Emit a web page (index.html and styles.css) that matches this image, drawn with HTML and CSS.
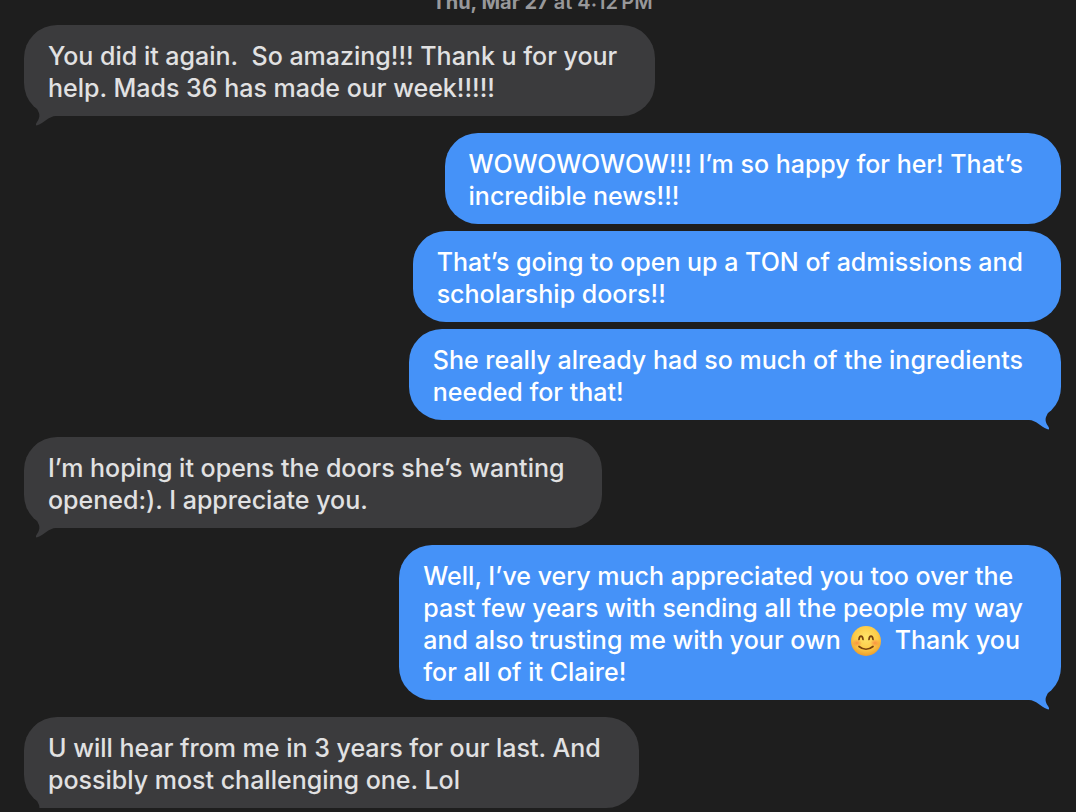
FILE: index.html
```html
<!DOCTYPE html>
<html lang="en">
<head>
    <meta charset="UTF-8">
    <title>Messages</title>
    <link rel="stylesheet" href="styles.css">
</head>
<body>
    <main class="chat">
        <div class="date"><strong>Thu, Mar 27</strong> at 4:12&thinsp;PM</div>

        <div class="group received">
            <p class="bubble">You did it again.&nbsp; So amazing!!! Thank u for your<br>help. Mads 36 has made our week!!!!!
                <svg class="tail" viewBox="0 0 24 18" aria-hidden="true"><path d="M3 0L4 3C6 6 6 10 3 14C1 17 2 18 4 17C10 15 15 8 22 8L24 8L24 0Z"/></svg>
            </p>
        </div>

        <div class="group sent">
            <p class="bubble">WOWOWOWOW!!! I’m so happy for her! That’s<br>incredible news!!!</p>
            <p class="bubble">That’s going to open up a TON of admissions and<br>scholarship doors!!</p>
            <p class="bubble">She really already had so much of the ingredients<br>needed for that!
                <svg class="tail" viewBox="0 0 24 18" aria-hidden="true"><path d="M3 0L4 3C6 6 6 10 3 14C1 17 2 18 4 17C10 15 15 8 22 8L24 8L24 0Z"/></svg>
            </p>
        </div>

        <div class="group received">
            <p class="bubble">I’m hoping it opens the doors she’s wanting<br>opened:). I appreciate you.
                <svg class="tail" viewBox="0 0 24 18" aria-hidden="true"><path d="M3 0L4 3C6 6 6 10 3 14C1 17 2 18 4 17C10 15 15 8 22 8L24 8L24 0Z"/></svg>
            </p>
        </div>

        <div class="group sent">
            <p class="bubble">Well, I’ve very much appreciated you too over the<br>past few years with sending all the people my way<br>and also trusting me with your own
                <svg class="emoji" viewBox="0 0 30 30" role="img" aria-label="smiling face">
                    <defs>
                        <radialGradient id="face" cx="50%" cy="38%" r="65%">
                            <stop offset="0" stop-color="#ffe569"/>
                            <stop offset="0.6" stop-color="#fccb48"/>
                            <stop offset="1" stop-color="#ec9728"/>
                        </radialGradient>
                        <radialGradient id="blush">
                            <stop offset="0" stop-color="#f9793d" stop-opacity="0.7"/>
                            <stop offset="1" stop-color="#f9793d" stop-opacity="0"/>
                        </radialGradient>
                    </defs>
                    <circle cx="15" cy="15" r="15" fill="url(#face)"/>
                    <ellipse cx="6" cy="17" rx="5" ry="4" fill="url(#blush)"/>
                    <ellipse cx="24" cy="17" rx="5" ry="4" fill="url(#blush)"/>
                    <g fill="none" stroke="#7a430e" stroke-width="1.7" stroke-linecap="round">
                        <path d="M8 13.5C8.4 9 11.6 9 12 13.5"/>
                        <path d="M18 13.5C18.4 9 21.6 9 22 13.5"/>
                        <path d="M8 20.5Q15 26 22 20.5"/>
                    </g>
                </svg>&nbsp; Thank you<br>for all of it Claire!
                <svg class="tail" viewBox="0 0 24 18" aria-hidden="true"><path d="M3 0L4 3C6 6 6 10 3 14C1 17 2 18 4 17C10 15 15 8 22 8L24 8L24 0Z"/></svg>
            </p>
        </div>

        <div class="group received">
            <p class="bubble">U will hear from me in 3 years for our last. And<br>possibly most challenging one. Lol
                <svg class="tail" viewBox="0 0 24 18" aria-hidden="true"><path d="M3 0L4 3C6 6 6 10 3 14C1 17 2 18 4 17C10 15 15 8 22 8L24 8L24 0Z"/></svg>
            </p>
        </div>
    </main>
</body>
</html>
```
FILE: styles.css
```css
body {
    margin: 0;
    background-color: #1e1e1e;
    font-family: Inter, "Liberation Sans", sans-serif;
    overflow: hidden;
}

.chat {
    display: flex;
    flex-direction: column;
    gap: 17px;
    padding: 0 15px 0 24px;
}

.date {
    margin: -8px 0 -4px;
    color: #98989a;
    font-size: 20px;
    font-weight: 600;
    line-height: 20px;
    text-align: center;
}

.date strong {
    font-weight: 700;
}

.group {
    display: flex;
    flex-direction: column;
    gap: 7px;
}

.received {
    align-items: flex-start;
    color: #e1e1e2;
    fill: #3b3b3d;
}

.sent {
    align-items: flex-end;
    color: #fff;
    fill: #4592f8;
}

.bubble {
    position: relative;
    margin: 0;
    padding: 15px 38px 12px 24px;
    border-radius: 33px;
    font-size: 25px;
    font-weight: 500;
    line-height: 32px;
}

.received .bubble {
    background-color: #3b3b3d;
}

.sent .bubble {
    background-color: #4592f8;
}

/* little hook under the bubble, mirrored for sent messages */
.tail {
    position: absolute;
    bottom: -10px;
    left: 10px;
    width: 24px;
    height: 18px;
}

.sent .tail {
    right: 10px;
    left: auto;
    transform: scaleX(-1);
}

.emoji {
    width: 30px;
    height: 30px;
    margin: -4px 0 -2px 4px;
    vertical-align: middle;
}
```
